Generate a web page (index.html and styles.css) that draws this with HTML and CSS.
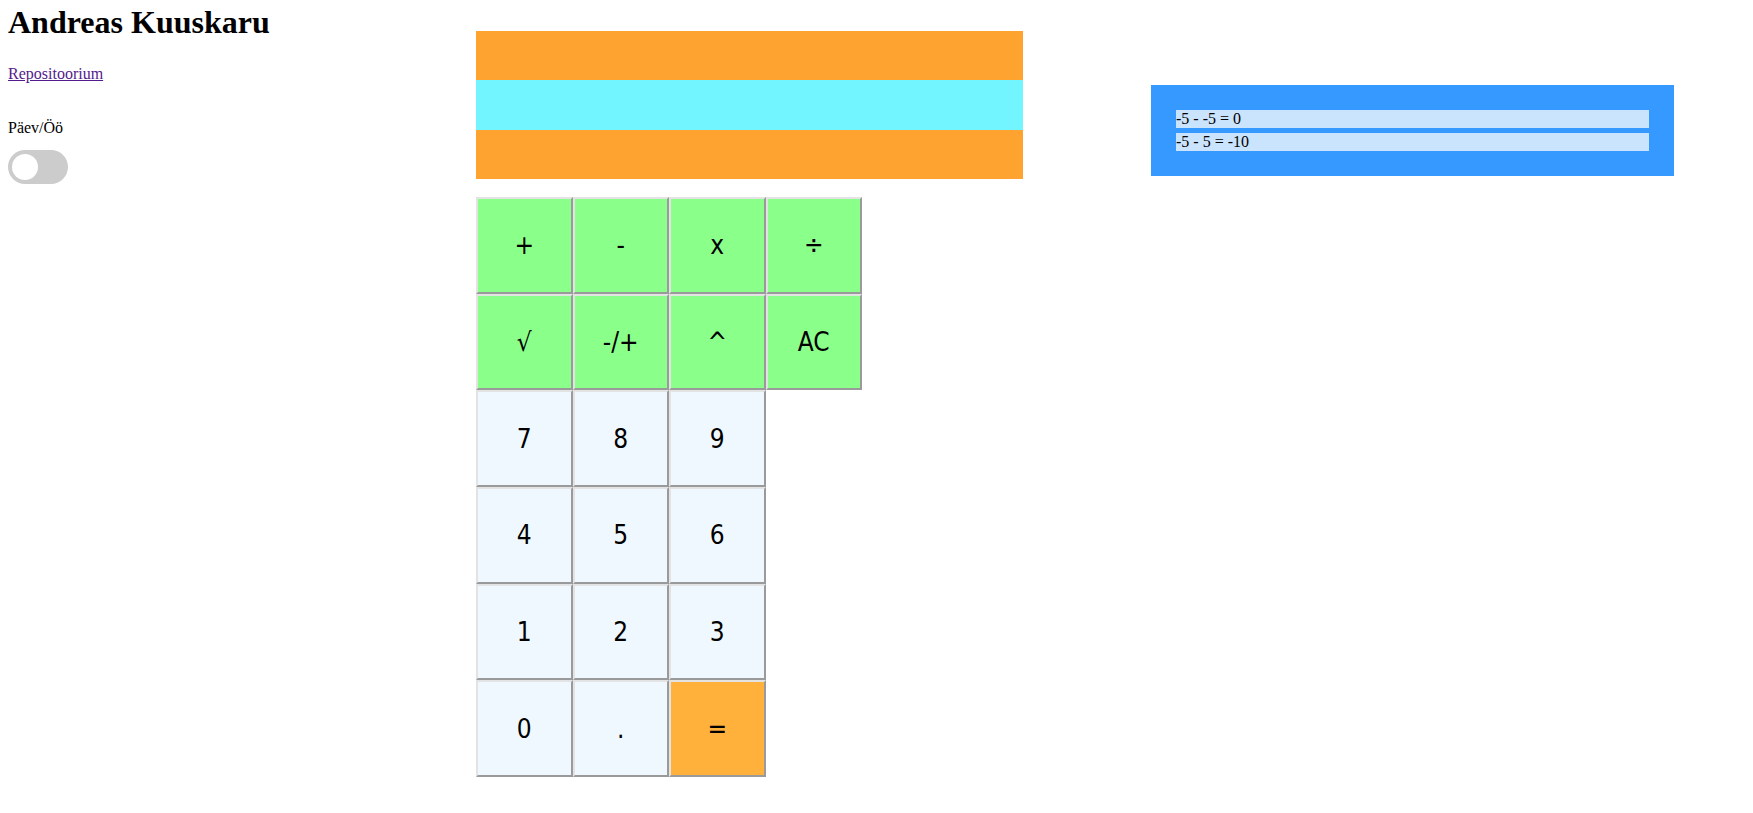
FILE: index.html
```html
<!DOCTYPE html>
<html lang="et">
<head>
<meta charset="utf-8">
<title>Kalkulaator</title>
<link rel="stylesheet" href="styles.css">
</head>
<body>
<div class="page">
  <aside class="side">
    <h1 class="title">Andreas Kuuskaru</h1>
    <p class="repo"><a class="repo-link" href="#">Repositoorium</a></p>
    <p class="mode">Päev/Öö</p>
    <label class="switch"><span class="knob"></span></label>
  </aside>
  <main class="calc">
    <div class="display">
      <div class="band band-orange"></div>
      <div class="band band-cyan"></div>
      <div class="band band-orange"></div>
    </div>
    <div class="keys">
      <button class="key op">+</button>
      <button class="key op">-</button>
      <button class="key op">x</button>
      <button class="key op">÷</button>
      <button class="key op">√</button>
      <button class="key op">-/+</button>
      <button class="key op">^</button>
      <button class="key op">AC</button>
      <button class="key num first">7</button>
      <button class="key num">8</button>
      <button class="key num">9</button>
      <button class="key num first">4</button>
      <button class="key num">5</button>
      <button class="key num">6</button>
      <button class="key num first">1</button>
      <button class="key num">2</button>
      <button class="key num">3</button>
      <button class="key num first">0</button>
      <button class="key num">.</button>
      <button class="key eq">=</button>
    </div>
  </main>
  <section class="history">
    <div class="entry">-5 - -5 = 0</div>
    <div class="entry">-5 - 5 = -10</div>
  </section>
</div>
</body>
</html>
```
FILE: styles.css
```css
html, body {
  margin: 0;
  padding: 0;
  background: #ffffff;
}

body {
  font-family: "Liberation Serif", "Times New Roman", serif;
  font-size: 16px;
  color: #000;
}

.page {
  display: flex;
  align-items: flex-start;
}

.side {
  box-sizing: border-box;
  width: 476px;
  padding: 4px 0 0 8px;
  display: flex;
  flex-direction: column;
  align-items: flex-start;
}

.title {
  margin: 0;
  font-size: 32px;
  line-height: 37px;
  font-weight: bold;
}

.repo {
  margin: 24px 0 0;
  line-height: 18px;
}

.repo-link {
  color: #551a8b;
}

.mode {
  margin: 36px 0 0;
  line-height: 18px;
}

.switch {
  margin-top: 13px;
  box-sizing: border-box;
  width: 60px;
  height: 34px;
  padding: 4px;
  border-radius: 34px;
  background: #cccccc;
  display: flex;
}

.knob {
  width: 26px;
  height: 26px;
  border-radius: 50%;
  background: #ffffff;
}

.calc {
  width: 547px;
  padding-top: 31px;
}

.display {
  display: flex;
  flex-direction: column;
  width: 547px;
}

.band {
  height: 49.33px;
}

.band-orange {
  background: #ffa330;
}

.band-cyan {
  background: #73f5ff;
}

.keys {
  margin-top: 18px;
  display: grid;
  grid-template-columns: repeat(4, 96.5px);
  grid-auto-rows: 96.67px;
}

.key {
  margin: 0;
  padding: 0;
  box-sizing: border-box;
  border-style: solid;
  border-width: 2px;
  border-color: #e3e3e3 #9a9a9a #9a9a9a #e3e3e3;
  font-family: "DejaVu Sans Condensed", "DejaVu Sans", "Noto Sans", sans-serif;
  font-size: 26px;
  color: #000;
  cursor: pointer;
}

.op {
  background: #8aff8a;
}

.num {
  background: #f0f8ff;
}

.eq {
  background: #ffb13b;
}

.first {
  grid-column: 1;
}

.history {
  margin: 85px 0 0 128px;
  box-sizing: border-box;
  width: 523px;
  padding: 25px;
  background: #3699ff;
  display: flex;
  flex-direction: column;
  gap: 5px;
}

.entry {
  height: 18px;
  line-height: 18px;
  background: #cbe4fd;
}
```
